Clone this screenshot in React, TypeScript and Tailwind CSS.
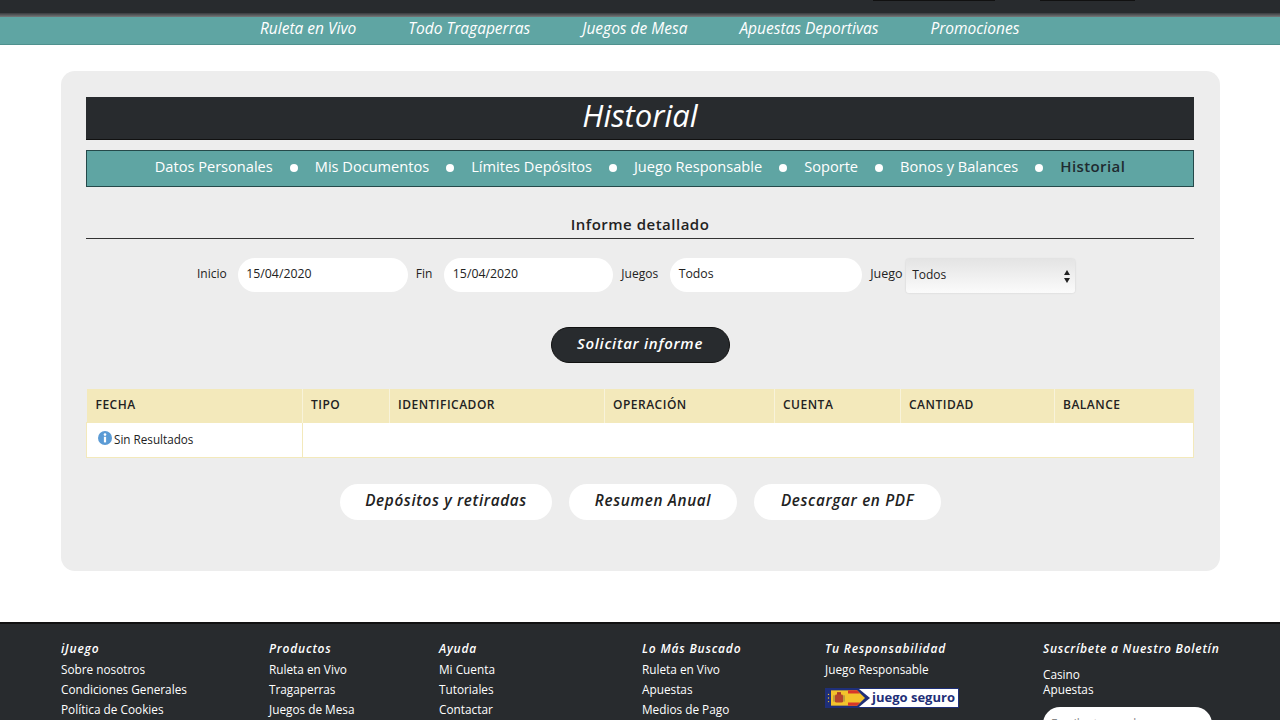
import React from "react";

const topLinks = ["Ruleta en Vivo", "Todo Tragaperras", "Juegos de Mesa", "Apuestas Deportivas", "Promociones"];
const accountLinks = ["Datos Personales", "Mis Documentos", "Límites Depósitos", "Juego Responsable", "Soporte", "Bonos y Balances"];

const columns = [
  { label: "FECHA", width: "w-[216px]" },
  { label: "TIPO", width: "w-[87px]" },
  { label: "IDENTIFICADOR", width: "w-[215px]" },
  { label: "OPERACIÓN", width: "w-[170px]" },
  { label: "CUENTA", width: "w-[126px]" },
  { label: "CANTIDAD", width: "w-[154px]" },
  { label: "BALANCE", width: "w-[139px]" },
];

const footerCols = [
  { title: "iJuego", width: "w-[208px]", links: ["Sobre nosotros", "Condiciones Generales", "Política de Cookies"] },
  { title: "Productos", width: "w-[170px]", links: ["Ruleta en Vivo", "Tragaperras", "Juegos de Mesa"] },
  { title: "Ayuda", width: "w-[203px]", links: ["Mi Cuenta", "Tutoriales", "Contactar"] },
  { title: "Lo Más Buscado", width: "w-[183px]", links: ["Ruleta en Vivo", "Apuestas", "Medios de Pago"] },
];

function FieldInput({ value, width }: { value: string; width: string }) {
  return (
    <div className={`flex h-[34px] items-center rounded-[17px] bg-white pb-[3px] pl-[8.5px] text-[12.3px] text-[#222] ${width}`}>
      {value}
    </div>
  );
}

function JuegoSeguro() {
  return (
    <div className="mt-[9px] flex h-[20px] w-[134px] items-center border border-[#1f2f78] bg-white">
      <svg width="46" height="18" viewBox="0 0 46 20" preserveAspectRatio="none" className="shrink-0">
        <rect width="46" height="20" fill="#fff" />
        <path d="M0 0H33L44 10L33 20H0Z" fill="#1f2f78" />
        <path d="M5 1.5H22V18.5H5Z" fill="#f3c32c" />
        <path d="M22 1.5H31L39 10L31 18.5H22Z" fill="#f3c32c" />
        <path d="M22 1.5H31L34 5H22ZM22 18.5H31L34 15H22Z" fill="#d8362a" />
        <rect x="9" y="6" width="8" height="9" rx="1.5" fill="#b5452c" />
        <rect x="11" y="3.5" width="4" height="3" fill="#a8372a" />
        <rect x="7.5" y="7" width="1" height="7" fill="#8a7a4a" />
        <rect x="17.5" y="7" width="1" height="7" fill="#8a7a4a" />
        <circle cx="2.5" cy="6" r="0.7" fill="#f3c32c" />
        <circle cx="2.5" cy="10" r="0.7" fill="#f3c32c" />
        <circle cx="2.5" cy="14" r="0.7" fill="#f3c32c" />
      </svg>
      <span className="pb-[1px] text-[13px] leading-none font-bold whitespace-nowrap text-[#1f2f78]">juego seguro</span>
    </div>
  );
}

export default function App() {
  return (
    <div className="flex h-[720px] w-[1280px] flex-col overflow-hidden bg-white font-['Open_Sans',sans-serif]">
      {/* Top bar */}
      <div className="flex h-[13px] shrink-0 items-start bg-[#282b2e] pl-[873px]">
        <div className="h-px w-[122px] bg-[#111]" />
        <div className="ml-[45px] h-px w-[95px] bg-[#111]" />
      </div>
      <div className="h-[4px] shrink-0 bg-gradient-to-b from-[#3a3c3f] to-[#77797a]" />
      <nav className="flex h-[28px] shrink-0 items-center border-b border-[#4f918e] bg-[#5fa5a3] pb-[3px] pl-[260px] text-[15.5px] text-white italic">
        {topLinks.map((l) => (
          <a key={l} className="mr-[52px]">{l}</a>
        ))}
      </nav>

      {/* Card */}
      <main className="mx-[61px] mt-[26px] h-[500px] w-[1159px] shrink-0 rounded-[14px] bg-[#ededed] pt-[26px] pr-[26px] pl-[25px]">
        <h1 className="flex h-[43px] items-center justify-center border-b border-[#111] bg-[#282b2e] pb-[5px] text-[31px] text-white italic">
          Historial
        </h1>
        <div className="mt-[10px] flex h-[37px] items-center justify-center border border-[#25494a] bg-[#5fa5a3] pb-[4px] text-[14.6px]">
          {accountLinks.map((l) => (
            <React.Fragment key={l}>
              <a className="text-white">{l}</a>
              <span className="mx-[17px] mt-[2px] h-[8px] w-[8px] rounded-full bg-white" />
            </React.Fragment>
          ))}
          <a className="text-[15px] font-semibold tracking-[0.4px] text-[#1f2b30]">Historial</a>
        </div>

        <h2 className="mt-[26px] text-center text-[15px] leading-[22px] font-semibold tracking-[0.5px] text-[#222]">
          Informe detallado
        </h2>
        <div className="mt-[3px] h-px bg-[#333]" />

        <form className="mt-[19px] flex items-start pl-[111px] text-[12px] leading-[32px] text-[#222]">
          <label className="mr-[11px]">Inicio</label>
          <FieldInput value="15/04/2020" width="w-[170px]" />
          <label className="mr-[12px] ml-[8px]">Fin</label>
          <FieldInput value="15/04/2020" width="w-[169px]" />
          <label className="mr-[12px] ml-[8px]">Juegos</label>
          <FieldInput value="Todos" width="w-[192px]" />
          <label className="ml-[8px] w-[36px] text-[12.5px]">Juego</label>
          <div className="mt-[1px] flex h-[34px] w-[169px] items-center justify-between rounded-[3px] bg-gradient-to-b from-[#e4e4e4] to-[#fbfbfb] pr-[5px] pb-[2px] pl-[6px] shadow-[0_0_2px_rgba(0,0,0,0.15)]">
            Todos
            <svg width="6" height="13" viewBox="0 0 6 13" fill="#222" className="mt-[2px]">
              <path d="M3 0L6 5H0Z" />
              <path d="M3 13L0 8H6Z" />
            </svg>
          </div>
        </form>

        <div className="mt-[34px] flex justify-center">
          <button className="h-[36px] w-[179px] rounded-[18px] border border-[#111] bg-[#282b2e] pb-[3px] text-[15px] font-semibold tracking-[0.7px] text-white italic">
            Solicitar informe
          </button>
        </div>

        <table className="mt-[26px] w-[1107px] table-fixed border-collapse text-[12px] text-[#222]">
          <thead>
            <tr className="h-[33px] bg-[#f3e9bb]">
              {columns.map((c) => (
                <th key={c.label} className={`border-l border-[#f8f3da] pb-[1px] pl-[8px] text-left font-semibold tracking-[0.5px] first:border-l-0 first:pl-[9px] ${c.width}`}>
                  {c.label}
                </th>
              ))}
            </tr>
          </thead>
          <tbody>
            <tr className="h-[35px] border border-[#f3e9bb] bg-white text-[11.7px]">
              <td className="border-r border-[#f3e9bb] pl-[11px]">
                <span className="flex items-center gap-[2px]">
                  <svg width="14" height="14" viewBox="0 0 14 14" className="-mt-[3px]">
                    <circle cx="7" cy="7" r="7" fill="#5b9bd5" />
                    <circle cx="7" cy="3.6" r="1.3" fill="#fff" />
                    <rect x="5.9" y="5.8" width="2.2" height="5.6" fill="#fff" />
                  </svg>
                  Sin Resultados
                </span>
              </td>
              <td colSpan={6} />
            </tr>
          </tbody>
        </table>

        <div className="mt-[26px] ml-[254px] flex gap-[17px] text-[15.3px] font-semibold tracking-[0.65px] text-[#222] italic">
          <button className="h-[36px] w-[212px] rounded-[18px] bg-white pb-[2px]">Depósitos y retiradas</button>
          <button className="h-[36px] w-[168px] rounded-[18px] bg-white pb-[2px]">Resumen Anual</button>
          <button className="h-[36px] w-[187px] rounded-[18px] bg-white pb-[2px]">Descargar en PDF</button>
        </div>
      </main>

      {/* Footer */}
      <footer className="mt-[51px] flex flex-1 border-t-2 border-[#111] bg-[#282b2e] pt-[17px] pl-[61px] text-[11.8px] text-white">
        {footerCols.map((col) => (
          <div key={col.title} className={col.width}>
            <h3 className="mb-[2px] text-[12px] leading-[16px] font-semibold tracking-[0.8px] italic">{col.title}</h3>
            {col.links.map((l) => (
              <a key={l} className="block leading-[20px]">{l}</a>
            ))}
          </div>
        ))}
        <div className="w-[218px]">
          <h3 className="mb-[2px] text-[12px] leading-[16px] font-semibold tracking-[0.8px] italic">Tu Responsabilidad</h3>
          <a className="block leading-[20px]">Juego Responsable</a>
          <JuegoSeguro />
        </div>
        <div className="w-[180px]">
          <h3 className="text-[12px] leading-[16px] font-semibold tracking-[0.75px] whitespace-nowrap italic">Suscríbete a Nuestro Boletín</h3>
          <p className="mt-[10px] leading-[15px]">Casino</p>
          <p className="leading-[15px]">Apuestas</p>
          <div className="mt-[10px] flex h-[34px] w-[169px] items-start rounded-[17px] bg-white pt-[8px] pl-[8px] text-[#888]">
            Escribe tu nombre
          </div>
        </div>
      </footer>
    </div>
  );
}
